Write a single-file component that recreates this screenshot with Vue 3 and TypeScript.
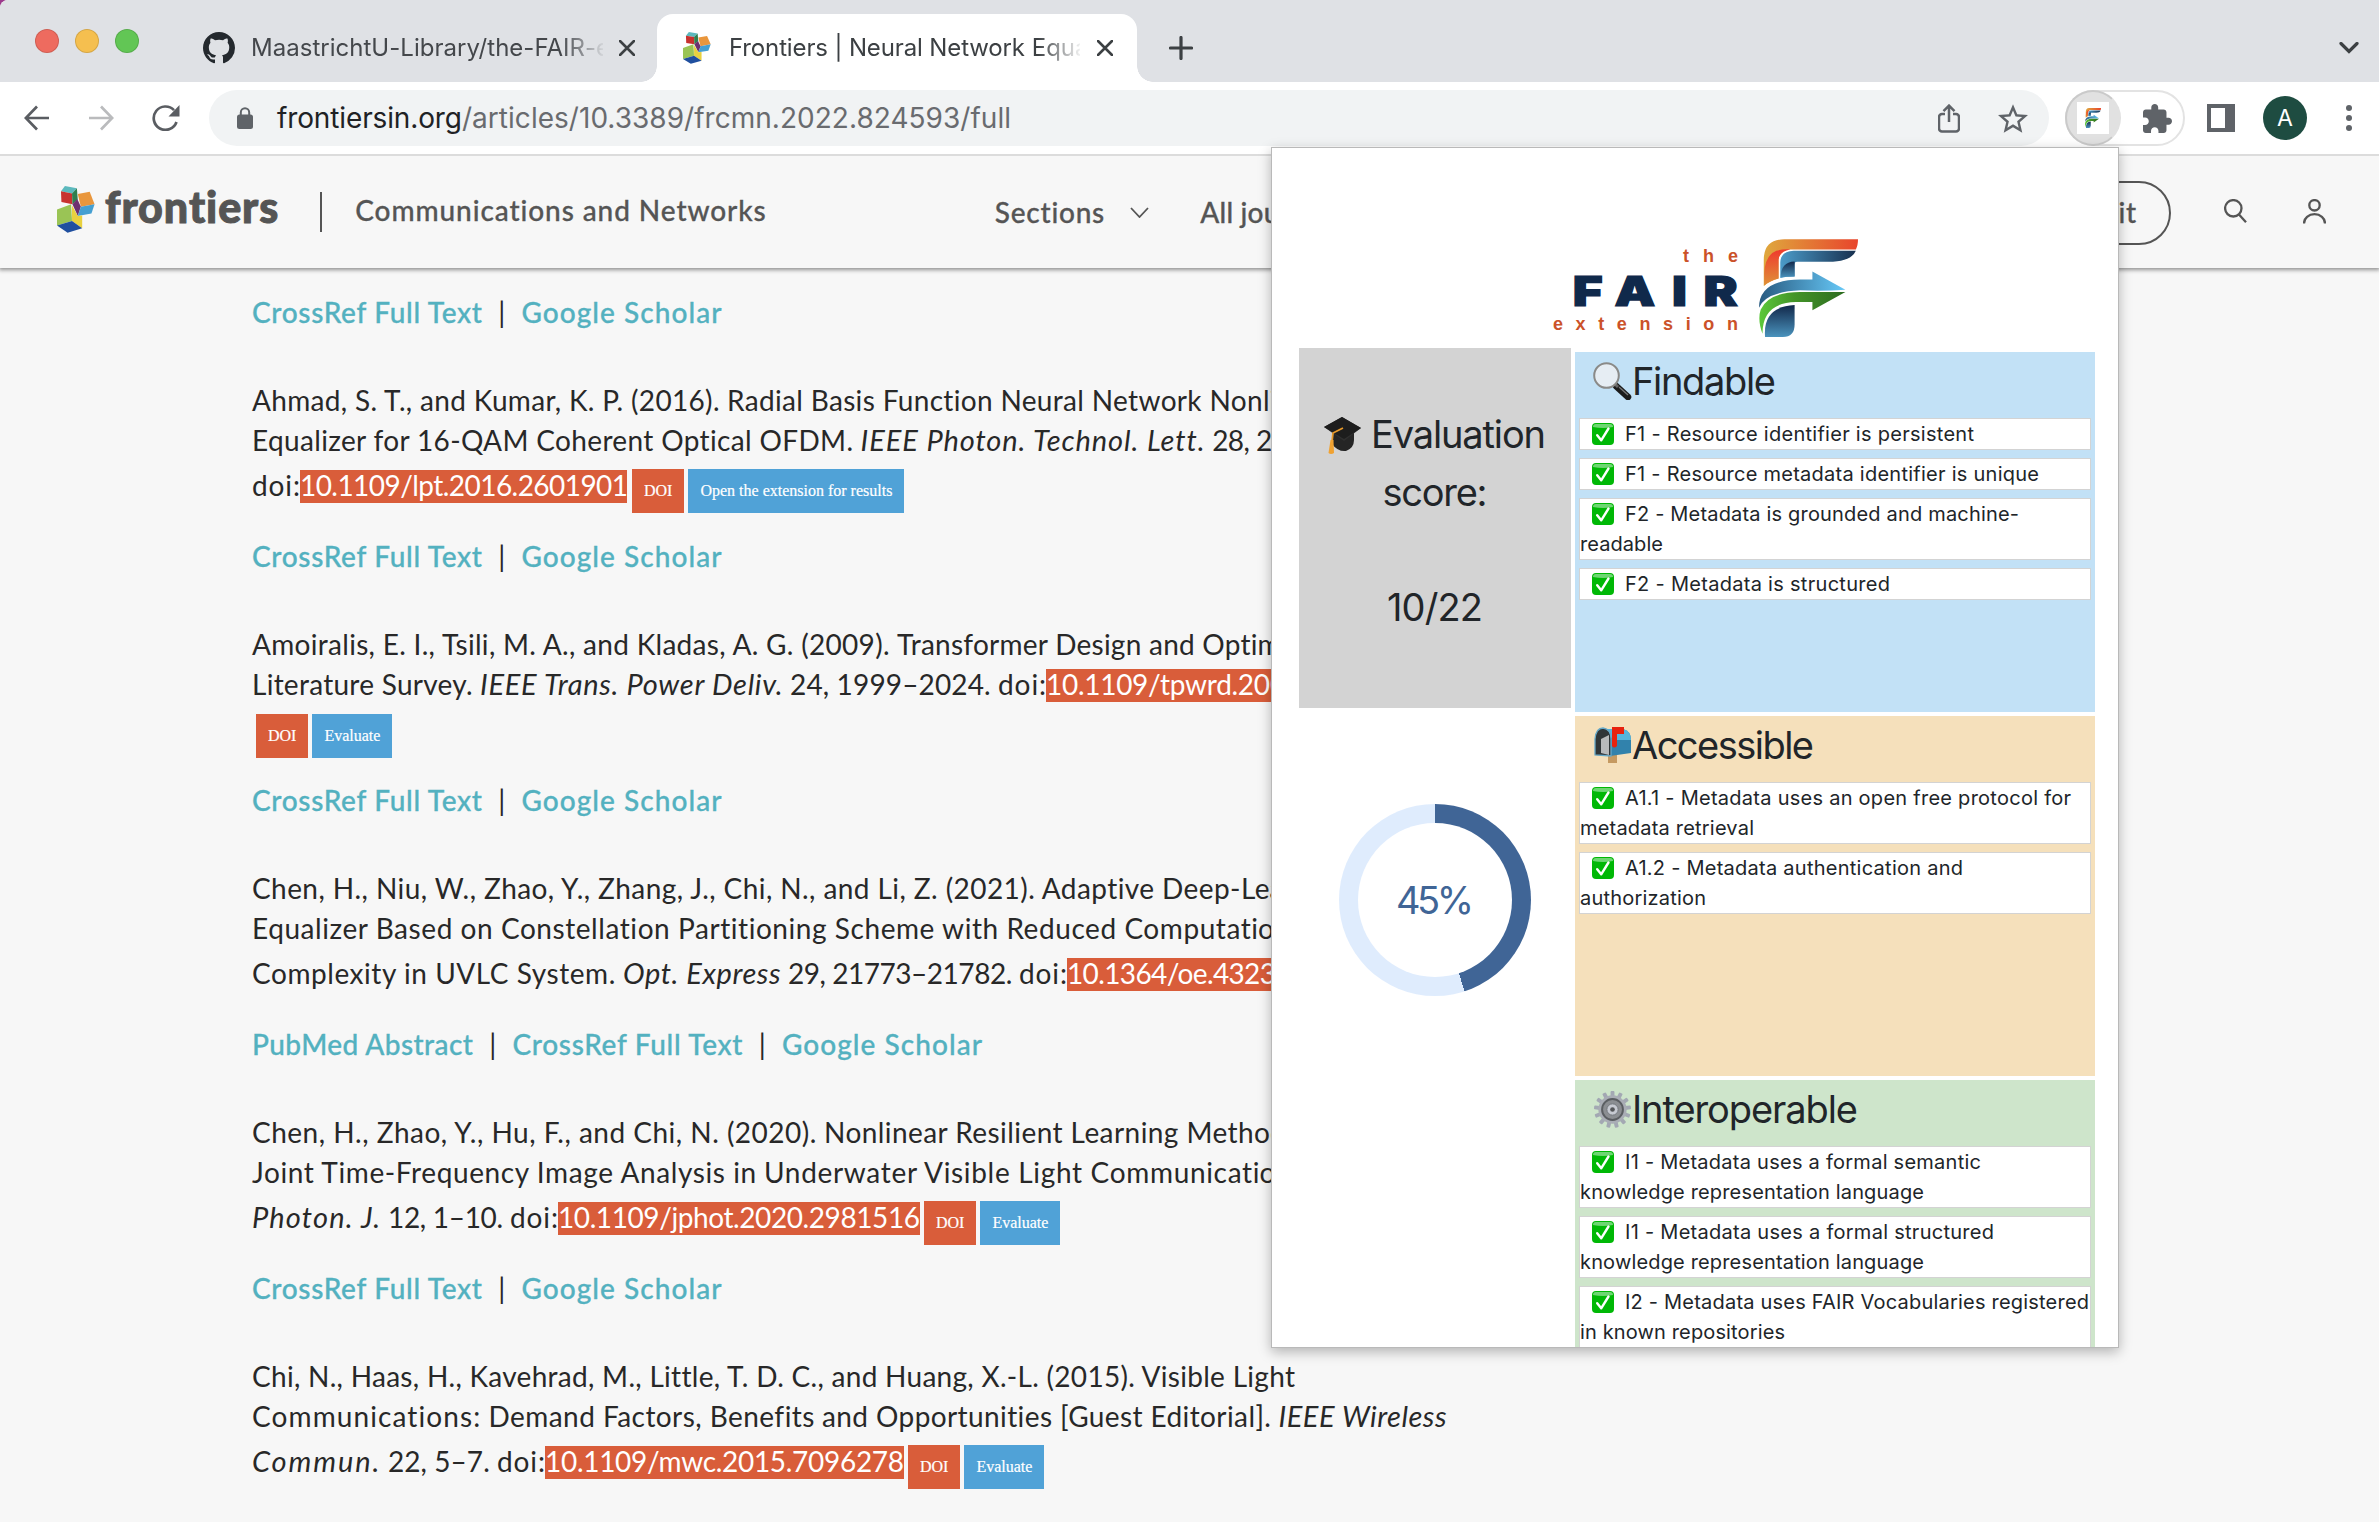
<script setup lang="ts">
type Kind = 'text' | 'em' | 'mark' | 'doi' | 'eval'
interface Seg { k: Kind; t: string; w?: number }
interface Link { t: string; w: number }
interface Entry { lines: Seg[][]; links: Link[] }
interface Row { t: string; w: number }
interface Section { name: string; w: number; icon: 'lens' | 'mail' | 'gear'; cls: string; items: Row[][] }

// Spreads the letters of a flex item so that it spans the given width.
function fit(el: HTMLElement, width?: number) {
  if (!width) return
  const n = (el.textContent ?? '').length
  const natural = parseFloat(getComputedStyle(el).width)
  const spacing = (width - natural) / Math.max(1, n - 1)
  el.style.letterSpacing = spacing + 'px'
  el.style.marginRight = -spacing + 'px'
}
const vFit = { mounted: (el: HTMLElement, b: { value?: number }) => fit(el, b.value) }

const crossref: Link = { t: 'CrossRef Full Text', w: 230 }
const scholar: Link = { t: 'Google Scholar', w: 200 }
const T = (t: string, w?: number): Seg => ({ k: 'text', t, w })
const I = (t: string, w?: number): Seg => ({ k: 'em', t, w })
const M = (t: string, w?: number): Seg => ({ k: 'mark', t, w })
const label = T('doi:', 48)
const doi: Seg = { k: 'doi', t: 'DOI' }
const ev = (t = 'Evaluate'): Seg => ({ k: 'eval', t })

const entries: Entry[] = [
  {
    lines: [
      [T('Ahmad, S. T., and Kumar, K. P. (2016). ', 475), T('Radial Basis Function Neural Network Nonl', 543), T('inear')],
      [T('Equalizer for 16-QAM Coherent Optical OFDM. ', 609), I('IEEE Photon. Technol. Lett. ', 350), T('28, 2', 60)],
      [label, M('10.1109/lpt.2016.2601901', 328), doi, ev('Open the extension for results')],
    ],
    links: [crossref, scholar],
  },
  {
    lines: [
      [T('Amoiralis, E. I., Tsili, M. A., and Kladas, A. G. (2009). ', 645), T('Transformer Design and Opti', 361), T('mization')],
      [T('Literature Survey. ', 228), I('IEEE Trans. Power Deliv. ', 310), T('24, 1999–2024. ', 208), label, M('10.1109/tpwrd.20', 224), M('09')],
      [doi, ev()],
    ],
    links: [crossref, scholar],
  },
  {
    lines: [
      [T('Chen, H., Niu, W., Zhao, Y., Zhang, J., Chi, N., and Li, Z. (2021). Adaptive Deep-Le', 1018), T('arning')],
      [T('Equalizer Based on Constellation Partitioning Scheme with Reduced Computati', 1008), T('onal')],
      [T('Complexity in UVLC System. ', 371), I('Opt. Express ', 165), T('29, 21773–21782. ', 231), label, M('10.1364/oe.4323', 209), M('28')],
    ],
    links: [{ t: 'PubMed Abstract', w: 221 }, crossref, scholar],
  },
  {
    lines: [
      [T('Chen, H., Zhao, Y., Hu, F., and Chi, N. (2020). ', 572), T('Nonlinear Resilient Learning Metho', 446), T('d')],
      [T('Joint Time-Frequency Image Analysis in ', 512), T('Underwater Visible Light Communicati', 496), T('on')],
      [I('Photon. J. ', 136), T('12, 1–10. ', 122), label, M('10.1109/jphot.2020.2981516', 362), doi, ev()],
    ],
    links: [crossref, scholar],
  },
  {
    lines: [
      [T('Chi, N., Haas, H., Kavehrad, M., Little, T. D. C., and Huang, X.-L. (2015). Visible Light', 1042)],
      [T('Communications: ', 237), T('Demand Factors, Benefits ', 333), T('and Opportunities [Guest Editorial]. ', 457), I('IEEE Wireless', 168)],
      [I('Commun. ', 136), T('22, 5–7. ', 109), label, M('10.1109/mwc.2015.7096278', 359), doi, ev()],
    ],
    links: [crossref, scholar],
  },
]

const sections: Section[] = [
  {
    name: 'Findable', w: 144, icon: 'lens', cls: 'blue',
    items: [
      [{ t: 'F1 - Resource identifier is persistent', w: 349 }],
      [{ t: 'F1 - Resource metadata identifier is unique', w: 414 }],
      [{ t: 'F2 - Metadata is grounded and machine-', w: 394 }, { t: 'readable', w: 83 }],
      [{ t: 'F2 - Metadata is structured', w: 265 }],
    ],
  },
  {
    name: 'Accessible', w: 182, icon: 'mail', cls: 'tan',
    items: [
      [{ t: 'A1.1 - Metadata uses an open free protocol for', w: 446 }, { t: 'metadata retrieval', w: 174 }],
      [{ t: 'A1.2 - Metadata authentication and', w: 338 }, { t: 'authorization', w: 126 }],
    ],
  },
  {
    name: 'Interoperable', w: 226, icon: 'gear', cls: 'green',
    items: [
      [{ t: 'I1 - Metadata uses a formal semantic', w: 356 }, { t: 'knowledge representation language', w: 344 }],
      [{ t: 'I1 - Metadata uses a formal structured', w: 369 }, { t: 'knowledge representation language', w: 344 }],
      [{ t: 'I2 - Metadata uses FAIR Vocabularies registered', w: 464 }, { t: 'in known repositories', w: 205 }],
    ],
  },
]

const cubes = [
  ['146,558 173,565 162,580 137,574', '#5cb9bd'],
  ['137,574 162,580 163,612 138,606', '#c8322f'],
  ['162,580 173,565 175,598 163,612', '#2f7f4f'],
  ['175,582 202,575 213,612 182,620', '#e9963c'],
  ['163,612 174,597 182,620 175,647', '#6d3070'],
  ['182,620 213,612 206,640 175,647', '#459fd1'],
  ['128,628 160,612 162,662 128,676', '#9ac455'],
  ['162,615 175,647 185,646 185,684 162,662', '#e8d13f'],
  ['128,676 162,662 185,684 152,697', '#1f4f9f'],
]
const teeth = Array.from({ length: 13 }, (_, i) => i * (360 / 13))
const score = 45
</script>

<template>
  <div class="window">
    <svg class="defs" width="0" height="0">
      <defs>
        <linearGradient id="f-or"><stop offset="0" stop-color="#dfa83d" /><stop offset="1" stop-color="#e8452c" /></linearGradient>
        <linearGradient id="f-red" x2="0" y2="1"><stop offset="0" stop-color="#ef3a2d" /><stop offset="1" stop-color="#df9238" /></linearGradient>
        <linearGradient id="f-bl"><stop offset="0" stop-color="#4b9bc9" /><stop offset="1" stop-color="#17304f" /></linearGradient>
        <linearGradient id="f-st" x2="0" y2="1"><stop offset="0" stop-color="#12284a" /><stop offset="1" stop-color="#4a93bd" /></linearGradient>
        <linearGradient id="f-ar"><stop offset="0" stop-color="#285a80" /><stop offset="1" stop-color="#67c9f8" /></linearGradient>
        <linearGradient id="f-gr"><stop offset="0" stop-color="#5bc83a" /><stop offset=".4" stop-color="#449528" /><stop offset="1" stop-color="#2c6b20" /></linearGradient>
        <symbol id="fmark" viewBox="0 0 228 292" preserveAspectRatio="none">
          <path fill="url(#f-or)" d="M11 140V62Q11 0 60 1H228Q228 20 223 31H72Q50 33 45 58V118Q25 125 11 140Z" />
          <path fill="url(#f-red)" d="M12 139V102Q14 48 40 35Q52 30 72 31Q47 36 45 62V118Q25 125 12 139Z" />
          <path fill="url(#f-bl)" d="M49 115V70Q50 36 80 35H223Q212 68 160 68H90Q82 66 82 75V112Q62 112 49 116Z" />
          <path fill="url(#f-st)" d="M50 115Q50 68 82 67V112Q62 112 50 115Z" />
          <path fill="url(#f-ar)" d="M0 205Q0 122 95 121H123V97L199 151Q150 156 95 153Q15 157 0 205Z" />
          <path fill="url(#f-gr)" d="M8 282Q-4 240 4 210Q22 158 95 158L199 158L123 212V188H85Q8 190 8 282Z" />
          <path fill="url(#f-st)" d="M14 292Q8 202 82 197V255Q82 292 55 292Z" />
        </symbol>
        <symbol id="cubes" viewBox="128 558 86 140" preserveAspectRatio="none">
          <polygon v-for="c in cubes" :key="c[0]" :points="c[0]" :fill="c[1]" />
        </symbol>
      </defs>
    </svg>

    <header class="strip">
      <div class="lights"><i class="r" /><i class="y" /><i class="g" /></div>
      <div class="tab idle">
        <svg width="32" height="32" viewBox="0 0 16 16" fill="#24292e"><path d="M8 0C3.58 0 0 3.58 0 8c0 3.54 2.29 6.53 5.47 7.59.4.07.55-.17.55-.38 0-.19-.01-.82-.01-1.49-2.01.37-2.53-.49-2.69-.94-.09-.23-.48-.94-.82-1.13-.28-.15-.68-.52-.01-.53.63-.01 1.08.58 1.23.82.72 1.21 1.87.87 2.33.66.07-.52.28-.87.51-1.07-1.78-.2-3.64-.89-3.64-3.95 0-.87.31-1.59.82-2.15-.08-.2-.36-1.02.08-2.12 0 0 .67-.21 2.2.82.64-.18 1.32-.27 2-.27s1.36.09 2 .27c1.53-1.04 2.2-.82 2.2-.82.44 1.1.16 1.92.08 2.12.51.56.82 1.27.82 2.15 0 3.07-1.87 3.75-3.65 3.95.29.25.54.73.54 1.48 0 1.07-.01 1.93-.01 2.2 0 .21.15.46.55.38A8.01 8.01 0 0 0 16 8c0-4.42-3.58-8-8-8z" /></svg>
        <div class="title"><span v-fit="345">MaastrichtU-Library/the-FAIR-</span><span>e</span></div>
        <svg width="16" height="16" viewBox="0 0 16 16" class="x"><path d="M1 1 15 15M15 1 1 15" /></svg>
      </div>
      <div class="tab active">
        <svg width="28" height="32"><use href="#cubes" width="28" height="32" /></svg>
        <div class="title"><span v-fit="296">Frontiers | Neural Network</span><span>&nbsp;Equa</span></div>
        <svg width="16" height="16" viewBox="0 0 16 16" class="x"><path d="M1 1 15 15M15 1 1 15" /></svg>
      </div>
      <svg class="plus" width="24" height="24" viewBox="0 0 24 24"><path d="M12 1.5V22.5M1.5 12H22.5" /></svg>
      <svg class="more" width="20" height="12" viewBox="0 0 20 12"><path d="M2 1.5 10 9.5 18 1.5" /></svg>
    </header>

    <div class="toolbar">
      <svg class="nav" width="26" height="26" viewBox="0 0 26 26"><path d="M25 13H2M13 1.5 1.8 13 13 24.5" /></svg>
      <svg class="nav off" width="26" height="26" viewBox="0 0 26 26"><path d="M1 13H24M13 1.5 24.2 13 13 24.5" /></svg>
      <svg class="nav reload" width="28" height="26" viewBox="0 0 28 26"><path d="M24.5 17A11.7 11.7 0 1 1 22 5.2" /><path class="solid" d="M27.5 0V11.5H16.5Z" /></svg>
      <div class="omni">
        <svg width="16" height="22" viewBox="0 0 16 22"><rect y="7.5" width="16" height="14.5" rx="2.5" fill="#5f6368" /><path d="M3.8 9V5.5a4.2 4.2 0 0 1 8.4 0V9" fill="none" stroke="#5f6368" stroke-width="2" /></svg>
        <span v-fit="185" class="host">frontiersin.org</span><span v-fit="549" class="path">/articles/10.3389/frcmn.2022.824593/full</span>
        <svg class="share" width="22" height="29" viewBox="0 0 22 29"><path d="M7 10H4a3 3 0 0 0-3 3V24.5a3 3 0 0 0 3 3H18a3 3 0 0 0 3-3V13a3 3 0 0 0-3-3H15M11 18V2M5.5 7.2 11 1.6 16.5 7.2" /></svg>
        <svg class="star" width="30" height="29" viewBox="2 2 20 19"><path d="M22 9.24l-7.19-.62L12 2 9.19 8.63 2 9.24l5.46 4.73L5.82 21 12 17.27 18.18 21l-1.63-7.03L22 9.24zM12 15.4l-3.76 2.27 1-4.28-3.32-2.88 4.38-.38L12 6.1l1.71 4.04 4.38.38-3.32 2.88 1 4.28L12 15.4z" /></svg>
      </div>
      <div class="exts">
        <div class="ext-on"><div><svg width="16" height="20"><use href="#fmark" width="16" height="20" /></svg></div></div>
        <svg width="29" height="29" viewBox="2 1 21 21" fill="#5f6368"><path d="M20.5 11H19V7c0-1.1-.9-2-2-2h-4V3.5C13 2.12 11.88 1 10.5 1S8 2.12 8 3.5V5H4c-1.1 0-1.99.9-1.99 2v3.8H3.5c1.49 0 2.7 1.21 2.7 2.7s-1.21 2.7-2.7 2.7H2V20c0 1.1.9 2 2 2h3.8v-1.5c0-1.49 1.21-2.7 2.7-2.7 1.49 0 2.7 1.21 2.7 2.7V22H17c1.1 0 2-.9 2-2v-4h1.5c1.38 0 2.5-1.12 2.5-2.5S21.88 11 20.5 11z" /></svg>
      </div>
      <div class="panel-icon" />
      <div class="avatar">A</div>
      <div class="dots"><i /><i /><i /></div>
    </div>

    <nav class="site">
      <svg class="cubes" width="38" height="47"><use href="#cubes" width="38" height="47" /></svg>
      <span v-fit="174" class="brand">frontiers</span>
      <i class="rule" />
      <span v-fit="411" class="journal">Communications and Networks</span>
      <span v-fit="110" class="sect">Sections</span>
      <svg class="chev" width="19" height="11" viewBox="0 0 19 11"><path d="M1 1 9.5 10 18 1" /></svg>
      <span class="all">All journals</span>
      <span class="submit">Submit</span>
      <svg class="ic" width="23" height="25" viewBox="0 0 23 25"><circle cx="9.3" cy="9.3" r="8.2" /><path d="M14.5 15 22 23.2" /></svg>
      <svg class="ic user" width="23" height="25" viewBox="0 0 23 25"><circle cx="11.5" cy="6.3" r="5.2" /><path d="M1 24.5a10.5 9.3 0 0 1 21 0" /></svg>
    </nav>

    <main>
      <div class="line links"><a v-fit="230">CrossRef Full Text</a><b>|</b><a v-fit="200">Google Scholar</a></div>
      <article v-for="(e, i) in entries" :key="i">
        <div v-for="(l, j) in e.lines" :key="j" class="line" :class="{ chips: l[0].k === 'doi' }">
          <span v-for="(s, n) in l" :key="n" v-fit="s.w" :class="s.k">{{ s.t }}</span>
        </div>
        <div class="line links">
          <template v-for="(k, n) in e.links" :key="n"><b v-if="n">|</b><a v-fit="k.w">{{ k.t }}</a></template>
        </div>
      </article>
    </main>

    <aside class="popup">
      <div class="logo">
        <div class="words">
          <span v-fit="55" class="the">the</span>
          <span v-fit="132" class="fair">FAIR</span>
          <span v-fit="185" class="the ext">extension</span>
        </div>
        <svg width="99" height="98"><use href="#fmark" width="99" height="98" /></svg>
      </div>
      <div class="cols">
        <div class="left">
          <div class="score">
            <div class="sl">
              <svg width="37" height="38" viewBox="0 0 37 38">
                <path d="M8 17V28Q14 36 22 35Q30 32 30 24V15Z" fill="#252525" />
                <path d="M18 1 37 12 20 25 0 11Z" fill="#2f2f2f" /><path d="M18 1 37 12 20 23 0 11Z" fill="#1d1d1d" />
                <path d="M19 12 9 17 8 26" fill="none" stroke="#e5982a" stroke-width="1.8" /><path d="M6.5 24H9.5L10 37Q7 39 4.5 37Z" fill="#f0a232" />
              </svg>
              <span v-fit="175">Evaluation</span>
            </div>
            <div class="sl"><span v-fit="105">score:</span></div>
            <div class="sl" />
            <div class="sl"><span v-fit="96">10/22</span></div>
          </div>
          <div class="donut" :style="{ background: `conic-gradient(#406596 ${score}%, #dfecfd 0)` }">
            <div><span v-fit="78">{{ score }}%</span></div>
          </div>
        </div>
        <div class="right">
          <section v-for="s in sections" :key="s.name" :class="s.cls">
            <h2>
              <svg v-if="s.icon === 'lens'" width="39" height="38" viewBox="0 0 39 38">
                <path d="M23 24 35 35" stroke="#1b1b1b" stroke-width="6.5" stroke-linecap="round" /><path d="M21 21 25 25" stroke="#666" stroke-width="3" /><path d="M26 25 35 33" stroke="#777" stroke-width="1.3" />
                <circle cx="13.5" cy="13.5" r="12.3" fill="#e6edf3" stroke="#8a8a88" stroke-width="2" />
              </svg>
              <svg v-else-if="s.icon === 'mail'" width="39" height="38" viewBox="0 0 39 38">
                <path d="M15 26H24V37H15Z" fill="#c59a61" /><path d="M10 3H30Q38 5 38 14V27L17 30Z" fill="#3182ac" /><path d="M12 3H30Q38 5 38 14H20Z" fill="#55b5dc" />
                <path d="M2 29V13Q3 2 10 2Q18 3 18 13V30Z" fill="#303638" stroke="#66a9c8" stroke-width="1.3" /><path d="M8 13 16 9V29L8 27Z" fill="#b8babb" />
                <path d="M19 1H31V8H24V20Q21 23 19 20Z" fill="#e7220e" />
              </svg>
              <svg v-else width="39" height="39" viewBox="-20 -20 40 40">
                <rect v-for="a in teeth" :key="a" x="-2" y="-19" width="4" height="7" rx="1" fill="#a3a8b3" :transform="`rotate(${a})`" />
                <circle r="14.5" fill="#a9adb5" /><circle r="10.7" fill="#8b8e92" stroke="#5b5e62" stroke-width="2" /><circle r="5.8" fill="#c7cad2" stroke="#72767c" stroke-width="1" /><circle r="2.4" fill="#55575a" />
              </svg>
              <span v-fit="s.w">{{ s.name }}</span>
            </h2>
            <div v-for="(it, n) in s.items" :key="n" class="item">
              <div v-for="(r, m) in it" :key="m" class="row">
                <svg v-if="!m" width="22" height="22" viewBox="0 0 22 22"><rect width="22" height="22" rx="4" fill="#00b806" /><path d="M1 4Q1 1 4 1H18Q21 1 21 4Q11 6 1 4Z" fill="#6ed673" /><path d="M5.2 12.2 9.2 17.3 16.5 5.5" fill="none" stroke="#fff" stroke-width="2.4" stroke-linecap="round" stroke-linejoin="round" /></svg>
                <span v-fit="r.w">{{ r.t }}</span>
              </div>
            </div>
          </section>
        </div>
      </div>
    </aside>
  </div>
</template>

<style>
html, body { background: #9c3a8c; overflow: hidden; }
</style>

<style scoped>
.window { position: relative; width: 2379px; height: 1522px; overflow: hidden; background: #f7f7f7; border-top-left-radius: 8px; font-family: Inter, "Liberation Sans", sans-serif; }
.window * { box-sizing: border-box; }
.defs { position: absolute; }
svg { flex: none; display: block; }
span, a { white-space: pre; flex: none; }

.strip { height: 82px; padding: 14px 20px 0 35px; background: #dfe1e5; display: flex; align-items: center; }
.lights { display: flex; gap: 16px; margin-top: -14px; }
.lights i { width: 24px; height: 24px; border-radius: 50%; border: 1px solid rgba(0, 0, 0, .13); }
.r { background: #ee6b5f; } .y { background: #f5bf4f; } .g { background: #62c655; }
.tab { display: flex; align-items: center; height: 68px; font-size: 24px; color: #44474b; }
.idle { margin-left: 64px; }
.title { display: flex; width: 352px; overflow: hidden; margin: 0 16px; line-height: 34px; mask-image: linear-gradient(90deg, #000 88%, transparent 101%); }
.x { fill: none; stroke: #3c4043; stroke-width: 2.6; stroke-linecap: round; }
.active { position: relative; width: 480px; margin-left: 22px; padding-left: 26px; background: #fff; border-radius: 16px 16px 0 0; color: #3c4043; }
.active .title { margin: 0 17px 0 18px; width: 351px; }
.active::before, .active::after { content: ""; position: absolute; bottom: 0; width: 16px; height: 16px; }
.active::before { left: -16px; background: radial-gradient(circle at 0 0, transparent 15.5px, #fff 16px); }
.active::after { right: -16px; background: radial-gradient(circle at 100% 0, transparent 15.5px, #fff 16px); }
.plus { margin-left: 32px; stroke: #3c4043; stroke-width: 3.2; stroke-linecap: round; }
.more { margin-left: auto; fill: none; stroke: #3c4043; stroke-width: 3.2; stroke-linecap: round; }

.toolbar { height: 74px; border-bottom: 2px solid #dcdcdc; background: #fff; display: flex; align-items: center; padding-left: 24px; }
.nav { fill: none; stroke: #5a5d62; stroke-width: 2.7; margin-right: 38px; }
.off { stroke: #babbbd; }
.reload { margin-right: 29px; }
.solid { fill: #5a5d62; stroke: none; }
.omni { width: 1840px; height: 56px; border-radius: 28px; background: #f1f3f4; display: flex; align-items: center; padding: 0 21px 0 28px; font-size: 28px; line-height: 40px; }
.host { margin-left: 24px; color: #202124; }
.path { color: #696b6f; }
.share { margin-left: auto; fill: none; stroke: #5f6368; stroke-width: 2.5; }
.star { margin-left: 38px; fill: #5f6368; }
.exts { width: 120px; height: 56px; margin-left: 16px; border: 2px solid #e3e3e3; border-radius: 28px; display: flex; align-items: center; justify-content: space-between; padding-right: 11px; }
.ext-on { width: 56px; height: 56px; margin-left: -2px; border-radius: 50%; background: #e1e1e1; border: 2px solid #cacaca; border-right-color: #e1e1e1; display: flex; align-items: center; justify-content: center; }
.ext-on div { width: 32px; height: 32px; background: #fff; display: flex; align-items: center; justify-content: center; }
.panel-icon { width: 28px; height: 28px; margin-left: 22px; border: 4px solid #5f6368; border-right-width: 10px; }
.avatar { width: 44px; height: 44px; margin-left: 28px; border-radius: 50%; background: #1e4c41; color: #fff; font-size: 23px; line-height: 44px; text-align: center; }
.dots { margin-left: 39px; display: flex; flex-direction: column; gap: 4px; }
.dots i { width: 6px; height: 6px; border-radius: 50%; background: #5f6368; }

.site { position: relative; height: 112px; display: flex; align-items: center; padding-left: 57px; background: #f7f7f7; box-shadow: 0 1px 4px 1px rgba(0, 0, 0, .42); clip-path: inset(0 0 -10px 0); font-family: Lato, "Open Sans", sans-serif; font-size: 28px; color: #555; font-weight: 500; line-height: 40px; -webkit-text-stroke: .3px #555; }
.cubes { margin: -6px 10px 0 0; }
.brand { font-weight: 900; font-size: 43px; margin-top: -10px; -webkit-text-stroke: 1px #555; }
.rule { width: 2px; height: 40px; margin-left: 42px; background: #555; }
.journal { margin: -4px 0 0 33px; }
.sect { margin: -1px 0 0 229px; }
.chev { margin-left: 26px; fill: none; stroke: #555; stroke-width: 1.8; }
.all { margin: -1px 0 0 51px; letter-spacing: .2px; }
.submit { width: 200px; height: 64px; margin: 2px 0 0 auto; padding-right: 32px; border: 2px solid #555; border-radius: 32px; line-height: 58px; text-align: right; letter-spacing: .8px; }
.ic { margin: -2px 0 0 53px; fill: none; stroke: #555; stroke-width: 2.3; }
.user { margin: -2px 53px 0 56px; }

main { padding: 24px 0 0 252px; font-family: Lato, "Open Sans", sans-serif; font-size: 28px; line-height: 40px; color: #282828; }
.line { display: flex; align-items: baseline; height: 40px; width: 1300px; white-space: nowrap; }
article { margin-top: 48px; }
article .line:nth-child(3) { margin-top: 5px; }
article .links { margin-top: 31px; }
article .chips:nth-child(3) { margin-top: 10px; }
article .chips + .links { margin-top: 26px; }
article:last-child .links { margin-top: 33px; }
.links { font-weight: 500; }
.links a { color: #53b1c0; -webkit-text-stroke: .3px #53b1c0; }
.links b { width: 39.5px; text-align: center; font-weight: 400; }
.em { font-style: italic; font-size: 29px; }
.mark { background: #d95d3a; color: #fff; height: 33px; line-height: 31px; }
.doi, .eval { height: 44px; margin-left: 4px; padding: 0 12px; background: #d95d3a; color: #fff; font: 16px/44px "Liberation Serif", serif; -webkit-text-stroke: .2px #fff; }
.eval { background: #50a2d7; }

.popup { position: absolute; left: 1271px; top: 147px; width: 848px; height: 1201px; overflow: hidden; border: 1px solid #b9b9b9; background: #fff; padding: 91px 23px 0 27px; color: #212529; }
.window::after { content: ""; position: absolute; left: 1271px; top: 147px; width: 848px; height: 1201px; pointer-events: none; box-shadow: 0 4px 12px rgba(0, 0, 0, .28); }
.logo { display: flex; height: 98px; padding-left: 254px; gap: 21px; }
.words { display: flex; flex-direction: column; align-items: flex-end; width: 185px; padding-top: 5px; }
.the { font: bold 18px/24px "Liberation Sans", sans-serif; color: #cb5229; }
.fair { font-size: 41px; font-weight: 900; line-height: 40px; margin-top: 3px; color: #10294b; transform: translateX(3px) scaleX(1.25); transform-origin: 100% 50%; -webkit-text-stroke: 1.2px #10294b; }
.ext { margin-top: 1px; }
.cols { display: flex; gap: 4px; margin-top: 11px; }
.left { width: 272px; display: flex; flex-direction: column; align-items: center; }
.score { width: 272px; height: 360px; padding-top: 58px; background: #d3d3d3; font-size: 38px; line-height: 57.5px; }
.sl { display: flex; justify-content: center; align-items: center; gap: 10px; height: 57.5px; }
.donut { width: 192px; height: 192px; margin-top: 96px; border-radius: 50%; display: flex; align-items: center; justify-content: center; }
.donut div { width: 154px; height: 154px; border-radius: 50%; background: #fff; display: flex; align-items: center; justify-content: center; color: #406596; font-size: 38px; line-height: 40px; }
.right { width: 520px; padding-top: 4px; display: flex; flex-direction: column; gap: 4px; }
section { height: 360px; padding: 0 4px; }
.blue { background: #c2e1f6; } .tan { background: #f5e0bb; } .green { background: #cee5cb; }
h2 { margin: 0; height: 66px; padding-left: 14px; display: flex; align-items: center; padding-bottom: 8px; font-size: 38px; font-weight: 400; line-height: 58px; }
.item { border: 1px solid #d3d3d3; background: #fff; margin-bottom: 8px; font-size: 20px; line-height: 30px; }
.row { display: flex; align-items: center; height: 30px; }
.row svg { margin: -1px 11px 0 12px; }
</style>
